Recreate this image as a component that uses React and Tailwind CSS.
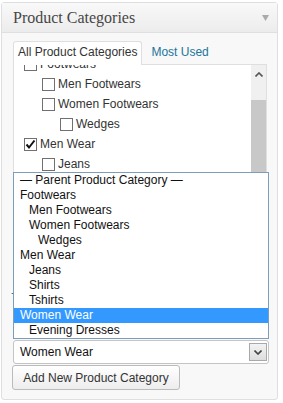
import React from "react";

// checklist rows, the list is scrolled so the first row is half hidden
const checklist = [
  { name: "Footwears", level: 0 },
  { name: "Men Footwears", level: 1 },
  { name: "Women Footwears", level: 1 },
  { name: "Wedges", level: 2 },
  { name: "Men Wear", level: 0, checked: true },
  { name: "Jeans", level: 1 },
];

const options = [
  { name: "— Parent Product Category —", level: 0 },
  { name: "Footwears", level: 0 },
  { name: "Men Footwears", level: 1 },
  { name: "Women Footwears", level: 1 },
  { name: "Wedges", level: 2 },
  { name: "Men Wear", level: 0 },
  { name: "Jeans", level: 1 },
  { name: "Shirts", level: 1 },
  { name: "Tshirts", level: 1 },
  { name: "Women Wear", level: 0, selected: true },
  { name: "Evening Dresses", level: 1 },
];

const checkPad = ["pl-[10px]", "pl-[28px]", "pl-[46px]"];
const optPad = ["pl-[6px]", "pl-[15px]", "pl-[24px]"];

const Checkbox = ({ checked }) => (
  <span className="w-[13px] h-[13px] border border-[#707070] bg-white flex items-center justify-center shrink-0">
    {checked && (
      <svg width="11" height="11" viewBox="0 0 11 11">
        <path d="M1.5 5.5 L4 8.5 L9.5 1.5" fill="none" stroke="#111" strokeWidth="2" />
      </svg>
    )}
  </span>
);

const App = () => {
  return (
    <div className="w-[283px] h-[403px] bg-white pl-px pt-[2px] overflow-hidden font-['Liberation_Sans',Arial,sans-serif]">
      <div className="relative w-[277px] h-[398px] border border-[#dfdfdf] rounded-[3px] bg-[#f8f8f8]">
        {/* header */}
        <div className="h-[30px] border-b border-[#dfdfdf] bg-gradient-to-b from-[#f9f9f9] to-[#ececec] flex items-center justify-between pl-[11px] pr-[8px]">
          <h3 className="font-['Liberation_Serif',Georgia,serif] text-[16px] text-[#464646] leading-none pt-[1px]">
            Product Categories
          </h3>
          <svg width="7" height="6" viewBox="0 0 7 6" className="mt-[1px]">
            <path d="M0 0 H7 L3.5 6 Z" fill="#aaaaaa" />
          </svg>
        </div>

        <div className="pl-[10px] pt-[8px]">
          {/* tabs */}
          <div className="flex items-start ml-px relative z-10 h-[24px] -mb-px">
            <div className="h-[24px] bg-white border border-b-0 border-[#dfdfdf] rounded-t-[3px] px-[4px] text-[12px] leading-[21px] text-[#333]">
              All Product Categories
            </div>
            <div className="pl-[9px] text-[12px] leading-[23px] text-[#21759b]">
              Most Used
            </div>
          </div>

          {/* checklist */}
          <div className="ml-px w-[254px] h-[200px] border border-[#dfdfdf] bg-white flex overflow-hidden">
            <div className="flex-1 overflow-hidden">
              <div className="-mt-[11px]">
                {checklist.map((c) => (
                  <div
                    key={c.name}
                    className={`h-[20px] flex items-center gap-[3px] text-[12px] text-[#333] ${checkPad[c.level]}`}
                  >
                    <Checkbox checked={c.checked} />
                    <span>{c.name}</span>
                  </div>
                ))}
              </div>
            </div>
            <div className="w-[15px] bg-[#f0f0f0] flex flex-col">
              <div className="h-[17px] flex items-center justify-center">
                <svg width="8" height="5" viewBox="0 0 8 5" className="mt-[2px]">
                  <path d="M0.5 4.5 L4 1 L7.5 4.5" fill="none" stroke="#555" strokeWidth="1.6" />
                </svg>
              </div>
              <div className="h-[18px]" />
              <div className="h-[120px] bg-[#c8c8c8]" />
            </div>
          </div>

          <div className="mt-[22px] h-[16px] -ml-[1px] text-[12px] leading-[16px] text-[#21759b]">
            +
          </div>

          {/* parent select */}
          <div className="relative mt-[38px] ml-px w-[256px] h-[24px] border border-[#c4c4c4] rounded-[3px] bg-white text-[12px] leading-[22px] text-[#111] pl-[6px]">
            Women Wear
            <div className="absolute right-[1px] top-[2px] w-[18px] h-[18px] border border-[#a9a9a9] bg-gradient-to-b from-[#f3f3f3] to-[#dedede] flex items-center justify-center">
              <svg width="8" height="5" viewBox="0 0 8 5">
                <path d="M0.5 0.5 L4 4 L7.5 0.5" fill="none" stroke="#444" strokeWidth="1.6" />
              </svg>
            </div>
          </div>

          <button className="mt-px w-[168px] h-[25px] border border-[#bbbbbb] rounded-[3px] bg-gradient-to-b from-white to-[#ededed] text-[12px] text-[#333] flex items-center justify-center">
            Add New Product Category
          </button>
        </div>

        {/* open dropdown list */}
        <div className="absolute left-[11px] top-[169px] w-[256px] h-[167px] border border-[#7f9db9] bg-white z-20">
          {options.map((o) => (
            <div
              key={o.name}
              className={`h-[15px] text-[12px] leading-[15px] whitespace-nowrap ${optPad[o.level]} ${
                o.selected ? "bg-[#3399ff] text-white" : "text-[#111]"
              }`}
            >
              {o.name}
            </div>
          ))}
        </div>
      </div>
    </div>
  );
};

export default App;
